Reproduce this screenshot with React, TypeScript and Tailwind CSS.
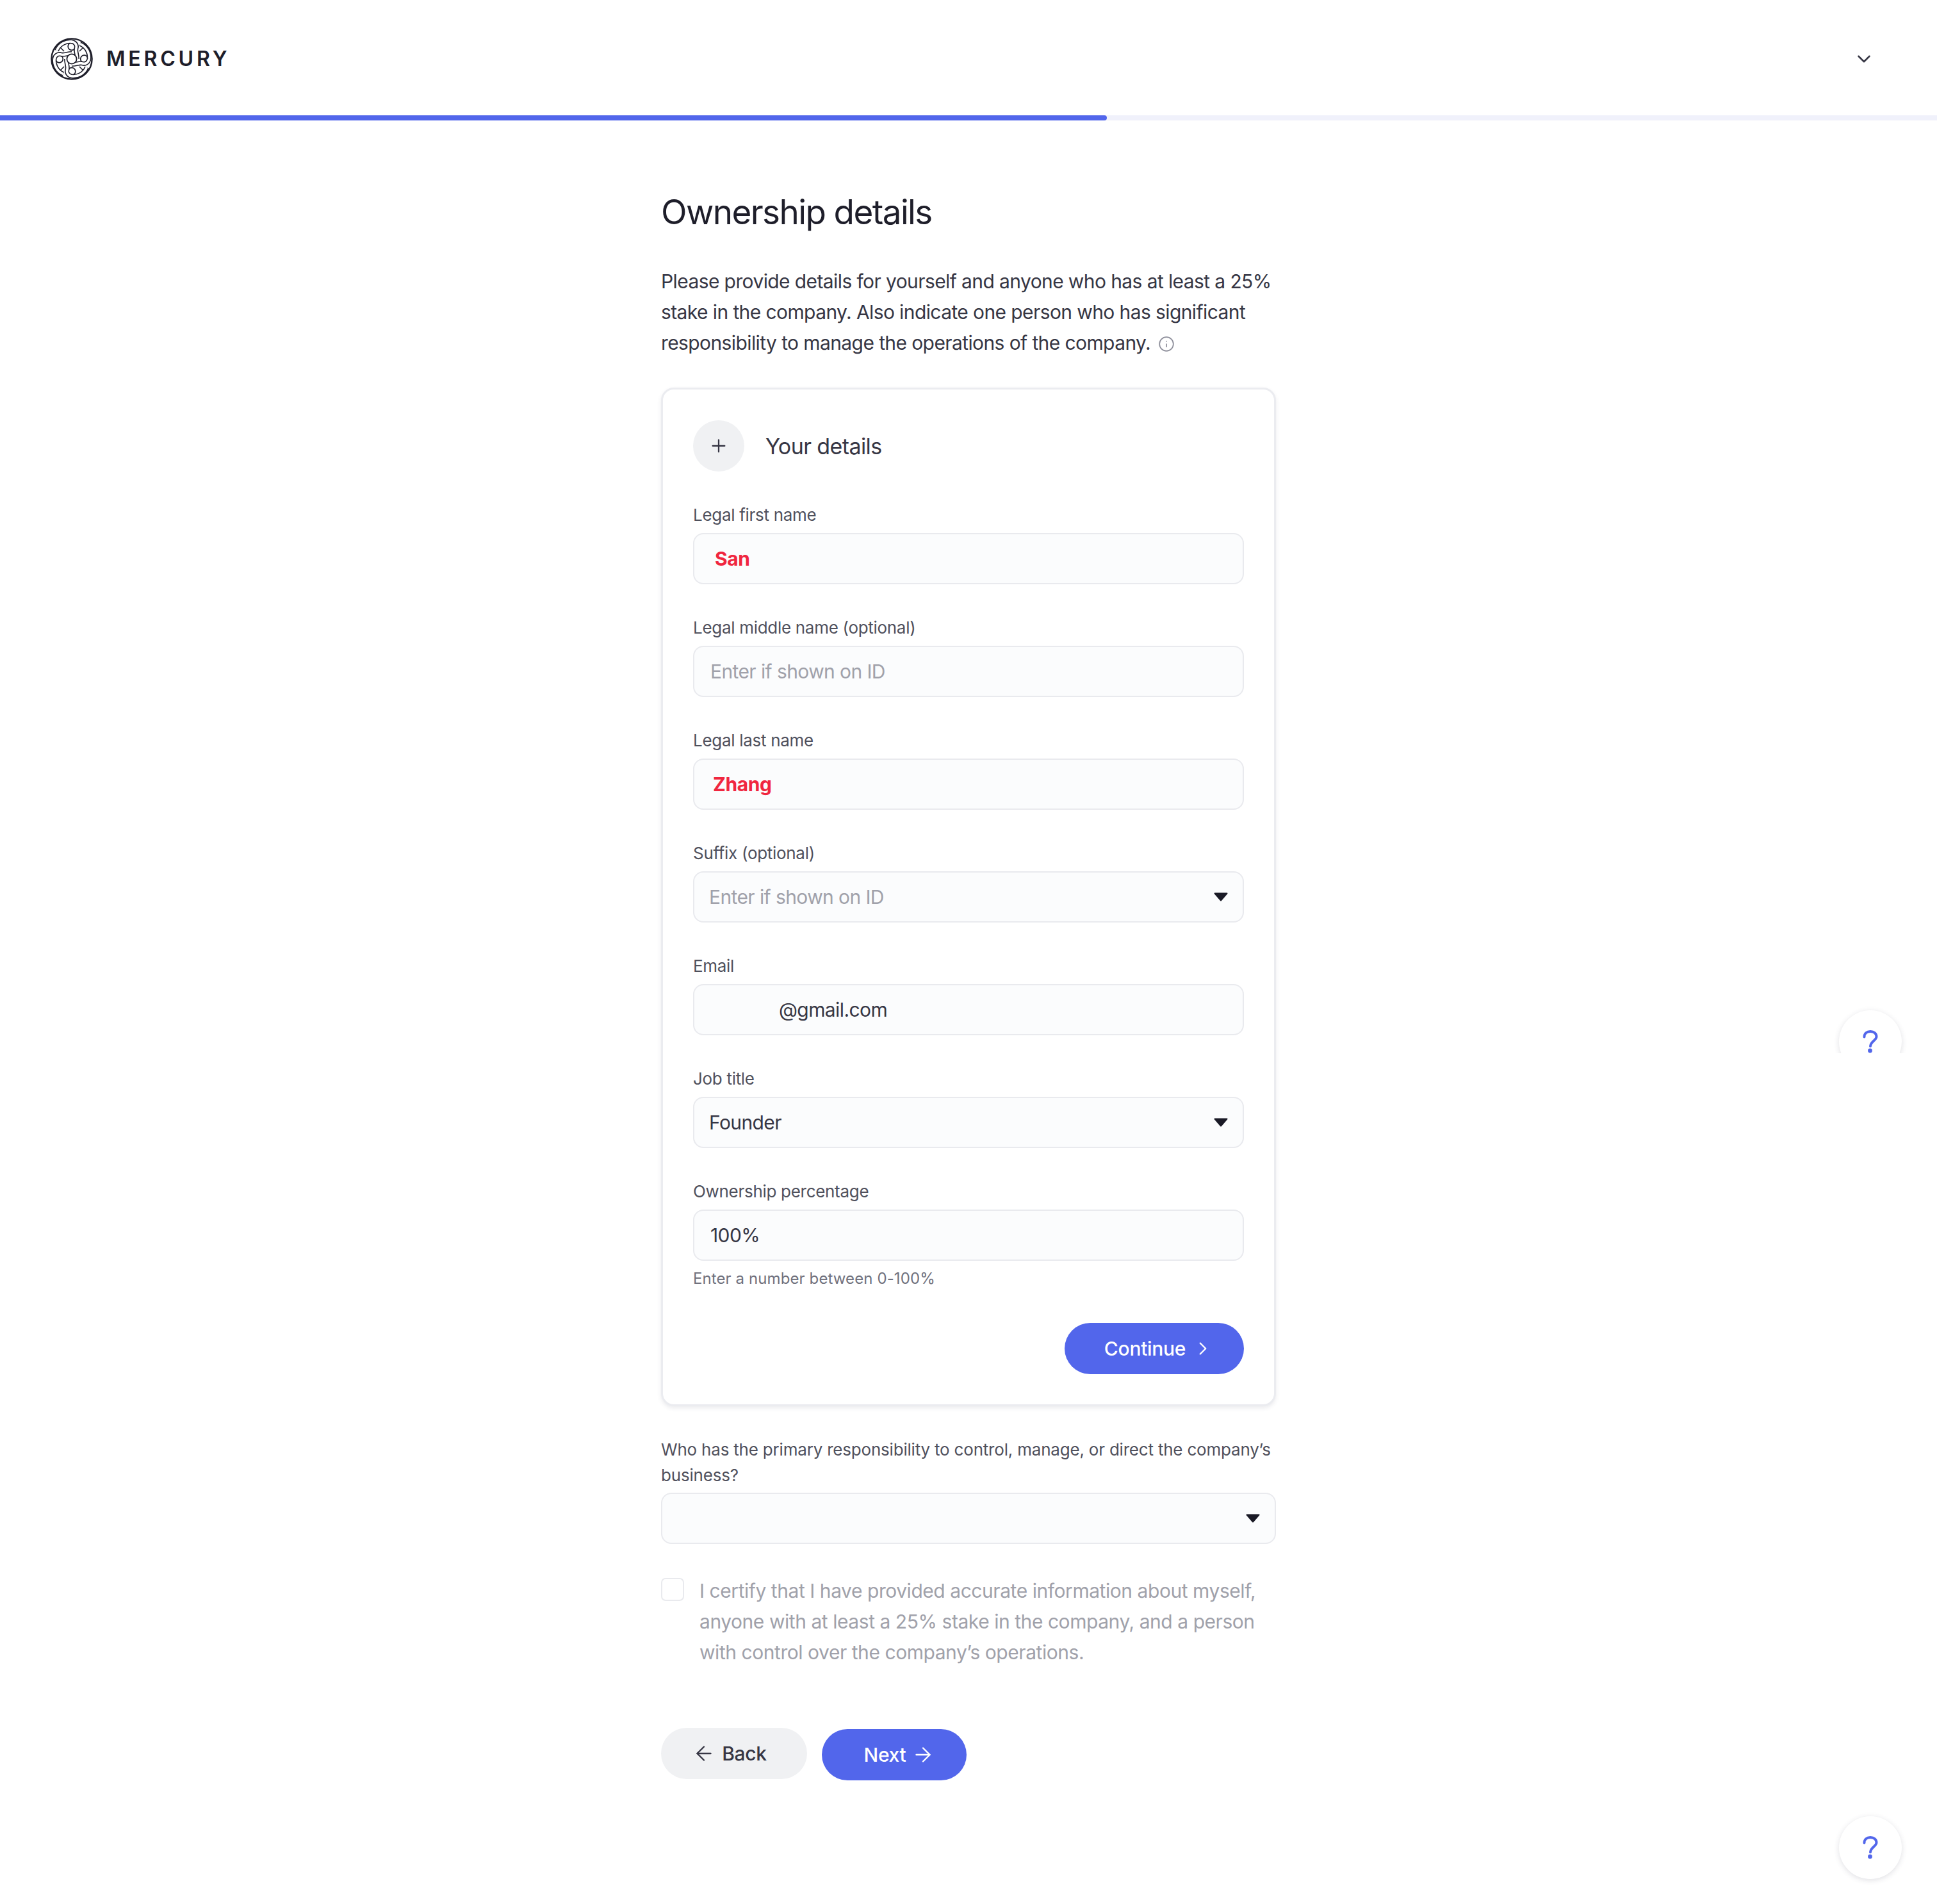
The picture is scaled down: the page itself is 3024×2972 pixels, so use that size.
import { ChevronDown, ChevronRight, ArrowLeft, ArrowRight, Plus, Info } from 'lucide-react';

const ARM = 'M9.5 20 C14 9 25 5 33 6 C39 7 41.5 12 40 16.5 C38.5 21 41.5 25 41.5 33';

function Logo() {
  return (
    <svg width="66" height="66" viewBox="0 0 66 66" fill="none">
      <circle cx="33" cy="33" r="31.6" stroke="#1e1e2a" strokeWidth="2.4" />
      {[45, 135, 225, 315].map((a) => (
        <path key={a} d="M33 3 V16" stroke="#1e1e2a" strokeWidth="1.6" transform={`rotate(${a} 33 33)`} />
      ))}
      {[0, 90, 180, 270].map((a) => (
        <g key={a} transform={`rotate(${a} 33 33)`}>
          <circle cx="33" cy="13.5" r="5.8" stroke="#1e1e2a" strokeWidth="1.7" />
          <path d={ARM} stroke="#1e1e2a" strokeWidth="7" />
          <path d={ARM} stroke="#ffffff" strokeWidth="3.8" />
        </g>
      ))}
      <circle cx="33" cy="33" r="7.6" fill="#ffffff" stroke="#1e1e2a" strokeWidth="1.8" />
    </svg>
  );
}

function Caret() {
  return (
    <svg width="22" height="14" viewBox="0 0 22 14" className="shrink-0">
      <path d="M1.5 1.5 H20.5 L11 12.5 Z" fill="#1a1a26" stroke="#1a1a26" strokeWidth="2" strokeLinejoin="round" />
    </svg>
  );
}

function Field({ label, children, className = '' }: { label: string; children: React.ReactNode; className?: string }) {
  return (
    <div className={className}>
      <label className="mb-[14px] block h-[29px] text-[26px] leading-[29px] tracking-[-0.3px] text-[#4f505c]">{label}</label>
      <div className="flex h-[80px] items-center justify-between rounded-[16px] border-2 border-[#e9eaee] bg-[#fbfcfd] px-[23px] text-[30px] tracking-[-0.6px] text-[#363644]">
        {children}
      </div>
    </div>
  );
}

function HelpButton({ className }: { className: string }) {
  return (
    <div className={`absolute flex h-[98px] w-[98px] items-center justify-center rounded-full bg-white shadow-[0_2px_8px_rgba(60,60,90,0.16)] ${className}`}>
      <svg width="24" height="36" viewBox="0 0 24 36" fill="none">
        <path d="M2.5 10.5 C2.5 5 6.5 2 12 2 C17.5 2 21.5 5.5 21.5 10 C21.5 16 12.5 17 12 25" stroke="#5266eb" strokeWidth="4" strokeLinecap="round" />
        <circle cx="11.5" cy="32" r="3.4" fill="#5266eb" />
      </svg>
    </div>
  );
}

export default function App() {
  return (
    <div className="relative h-[2972px] w-[3024px] overflow-hidden bg-white font-['Inter',sans-serif] text-[#1e1e2a]">
      {/* Header */}
      <header className="flex h-[180px] items-center justify-between pl-[79px] pr-[97px] pt-[3px]">
        <div className="flex items-center gap-[21px]">
          <Logo />
          <span className="text-[32px] font-semibold tracking-[4.8px] text-[#1e1e2a]">MERCURY</span>
        </div>
        <ChevronDown size={34} strokeWidth={1.8} color="#363644" />
      </header>

      {/* Progress */}
      <div className="h-[8px] w-full bg-[#f0f1fb]">
        <div className="h-full w-[1728px] rounded-r-[4px] bg-[#5266eb]" />
      </div>

      {/* Form column */}
      <main className="mx-auto w-[960px] pt-[107px]">
        <h1 className="h-[72px] text-[53px] leading-[72px] tracking-[-1.6px] text-[#1e1e2a]">Ownership details</h1>
        <p className="mt-[48px] text-[30px] leading-[48px] tracking-[-0.6px] text-[#363644]">
          Please provide details for yourself and anyone who has at least a 25% stake in the company. Also indicate one person who has significant responsibility to manage the operations of the company.{' '}
          <Info size={26} strokeWidth={1.6} color="#8d8e9a" className="ml-[4px] inline-block align-[-4px]" />
        </p>

        {/* Card */}
        <section className="mt-[46px] h-[1590px] rounded-[20px] border-[3px] border-[#ebecf0] bg-white px-[47px] pt-[48px] shadow-[0_3px_6px_rgba(60,60,90,0.1)]">
          <div className="flex items-center gap-[33px]">
            <div className="flex h-[80px] w-[80px] items-center justify-center rounded-full bg-[#f0f1f3]">
              <Plus size={32} strokeWidth={1.7} color="#363644" />
            </div>
            <h2 className="text-[34px] tracking-[-0.6px] text-[#363644]">Your details</h2>
          </div>

          <Field label="Legal first name" className="mt-[53px]">
            <span className="pl-[9px] font-bold tracking-[-0.4px] text-[#f0263f]">San</span>
          </Field>
          <Field label="Legal middle name (optional)" className="mt-[53px]">
            <span className="pl-[2px] text-[#a0a1aa]">Enter if shown on ID</span>
          </Field>
          <Field label="Legal last name" className="mt-[53px]">
            <span className="pl-[6px] font-bold tracking-[-0.4px] text-[#f0263f]">Zhang</span>
          </Field>
          <Field label="Suffix (optional)" className="mt-[53px]">
            <span className="text-[#a0a1aa]">Enter if shown on ID</span>
            <Caret />
          </Field>
          <Field label="Email" className="mt-[53px]">
            <span className="pl-[109px]">@gmail.com</span>
          </Field>
          <Field label="Job title" className="mt-[53px]">
            <span>Founder</span>
            <Caret />
          </Field>
          <Field label="Ownership percentage" className="mt-[53px]">
            <span className="pl-[2px]">100%</span>
          </Field>
          <p className="mt-[13px] text-[24px] leading-[30px] tracking-[0.1px] text-[#70717d]">Enter a number between 0-100%</p>

          <div className="mt-[54px] flex justify-end">
            <button className="flex h-[80px] w-[280px] items-center justify-center gap-[10px] rounded-full bg-[#5266eb] pl-[15px] text-[30px] font-medium tracking-[-0.3px] text-white">
              Continue
              <ChevronRight size={34} strokeWidth={1.7} />
            </button>
          </div>
        </section>

        {/* Control person */}
        <div className="mt-[48px]">
          <p className="text-[26px] leading-[40px] tracking-[-0.2px] text-[#4f505c]">
            Who has the primary responsibility to control, manage, or direct the company’s business?
          </p>
          <div className="mt-[7px] flex h-[80px] items-center justify-end rounded-[16px] border-2 border-[#e9eaee] bg-[#fbfcfd] px-[23px]">
            <Caret />
          </div>
        </div>

        {/* Certify */}
        <div className="mt-[49px] flex items-start gap-[24px]">
          <div className="mt-[4px] h-[36px] w-[36px] shrink-0 rounded-[7px] border-2 border-[#e9eaee] bg-white" />
          <p className="text-[30px] leading-[48px] tracking-[-0.45px] text-[#a0a1aa]">
            I certify that I have provided accurate information about myself, anyone with at least a 25% stake in the company, and a person with control over the company’s operations.
          </p>
        </div>

        {/* Footer actions */}
        <div className="mt-[94px] flex items-start gap-[23px]">
          <button className="flex h-[80px] w-[228px] items-center justify-center gap-[10px] rounded-full bg-[#f0f1f3] pr-[14px] text-[30px] font-medium tracking-[-0.3px] text-[#363644]">
            <ArrowLeft size={36} strokeWidth={1.6} />
            Back
          </button>
          <button className="mt-[2px] flex h-[80px] w-[226px] items-center justify-center gap-[9px] rounded-full bg-[#5266eb] pl-[16px] text-[30px] font-medium tracking-[-0.3px] text-white">
            Next
            <ArrowRight size={36} strokeWidth={1.6} />
          </button>
        </div>
      </main>

      {/* Floating help widgets */}
      <div className="absolute left-[2850px] top-[1560px] h-[84px] w-[140px] overflow-hidden">
        <HelpButton className="left-[21px] top-[17px]" />
      </div>
      <HelpButton className="left-[2871px] top-[2835px]" />
    </div>
  );
}
